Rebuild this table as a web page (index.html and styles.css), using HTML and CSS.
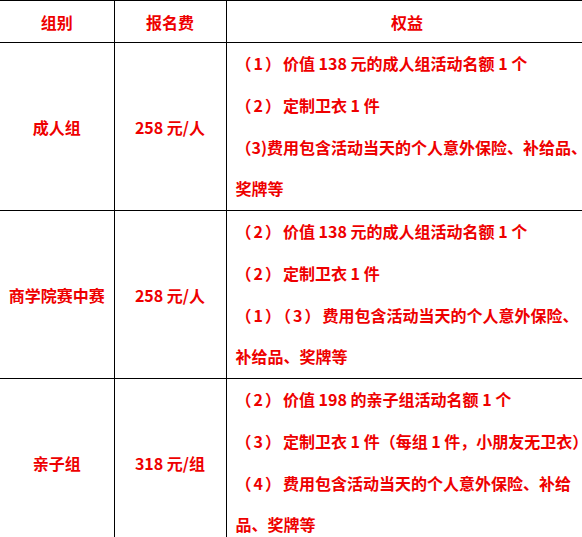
FILE: index.html
```html
<!DOCTYPE html>
<html lang="zh-CN">
<head>
<meta charset="utf-8">
<link rel="stylesheet" href="styles.css">
</head>
<body>
<table class="fee-table">
  <colgroup>
    <col class="c1"><col class="c2"><col class="c3">
  </colgroup>
  <thead>
    <tr class="head-row">
      <th>组别</th>
      <th>报名费</th>
      <th class="head-benefit">权益</th>
    </tr>
  </thead>
  <tbody>
    <tr>
      <td class="center">成人组</td>
      <td class="center">258 元/人</td>
      <td class="benefits">
        <p><span class="pn">（1）</span>价值 138 元的成人组活动名额 1 个</p>
        <p><span class="pn">（2）</span>定制卫衣 1 件</p>
        <p>（3)费用包含活动当天的个人意外保险、补给品、奖牌等</p>
      </td>
    </tr>
    <tr>
      <td class="center">商学院赛中赛</td>
      <td class="center">258 元/人</td>
      <td class="benefits">
        <p><span class="pn">（2）</span>价值 138 元的成人组活动名额 1 个</p>
        <p><span class="pn">（2）</span>定制卫衣 1 件</p>
        <p><span class="pn">（1）（3）</span>费用包含活动当天的个人意外保险、补给品、奖牌等</p>
      </td>
    </tr>
    <tr>
      <td class="center">亲子组</td>
      <td class="center">318 元/组</td>
      <td class="benefits">
        <p><span class="pn">（2）</span>价值 198 的亲子组活动名额 1 个</p>
        <p><span class="pn">（3）</span>定制卫衣 1 件（每组 1 件，小朋友无卫衣）</p>
        <p><span class="pn">（4）</span>费用包含活动当天的个人意外保险、补给品、奖牌等</p>
      </td>
    </tr>
  </tbody>
</table>
</body>
</html>
```

FILE: styles.css
```css
html, body {
  margin: 0;
  padding: 0;
  background: #ffffff;
}

body {
  overflow: hidden;
  font-family: "Noto Sans CJK SC", "Noto Sans", sans-serif;
  font-weight: 700;
  font-size: 16px;
  color: #ee0000;
}

.fee-table {
  border-collapse: collapse;
  table-layout: fixed;
  width: 594px;
}

.c1 { width: 114px; }
.c2 { width: 112px; }
.c3 { width: 368px; }

.fee-table th,
.fee-table td {
  border: 1px solid #000000;
  padding: 0;
}

.fee-table tr > *:first-child {
  border-left: none;
}

.head-row th {
  height: 41px;
  font-weight: 700;
  text-align: center;
  vertical-align: middle;
  line-height: 20px;
}

.head-row .head-benefit {
  padding-right: 6px;
}

.center {
  text-align: center;
  vertical-align: middle;
}

.benefits {
  padding: 0 3px 0 9px !important;
  vertical-align: top;
}

.benefits p {
  margin: 0;
  line-height: 41.75px;
}

.pn {
  letter-spacing: 2px;
}
```
